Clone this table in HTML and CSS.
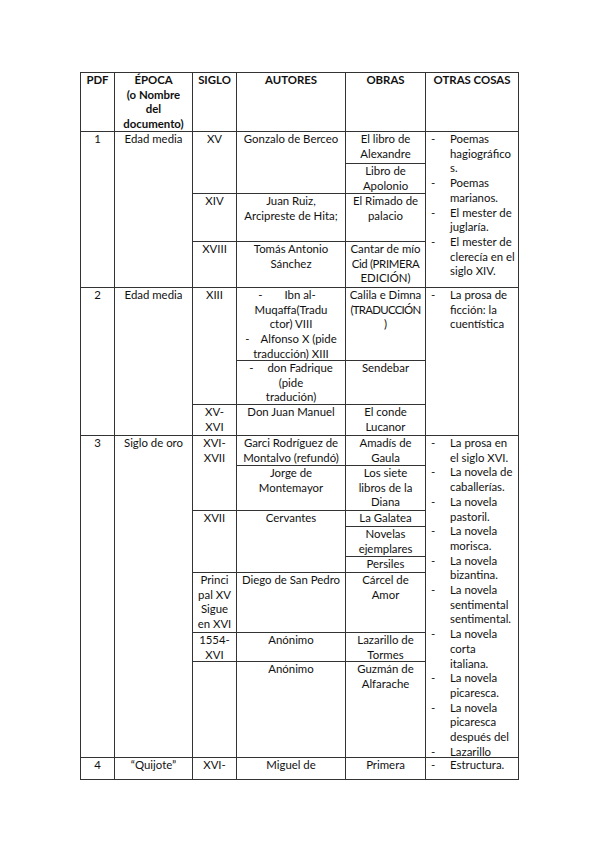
FILE: index.html
```html
<!DOCTYPE html>
<html lang="es">
<head>
<meta charset="utf-8">
<title>Tabla</title>
<link rel="stylesheet" href="styles.css">
</head>
<body>
<div class="page">
  <div class="grid">
    <div class="c h c1 r1">PDF</div>
    <div class="c h c2 r1">ÉPOCA<br>(o Nombre<br>del<br>documento)</div>
    <div class="c h c3 r1">SIGLO</div>
    <div class="c h c4 r1">AUTORES</div>
    <div class="c h c5 r1">OBRAS</div>
    <div class="c h c6 r1">OTRAS COSAS</div>

    <div class="c c1 g1">1</div>
    <div class="c c2 g1">Edad media</div>
    <div class="c c3 s-xv">XV</div>
    <div class="c c4 s-xv">Gonzalo de Berceo</div>
    <div class="c c5 r2">El libro de<br>Alexandre</div>
    <div class="c c5 r3">Libro de<br>Apolonio</div>
    <div class="c c3 r4">XIV</div>
    <div class="c c4 r4">Juan Ruiz,<br>Arcipreste de Hita;</div>
    <div class="c c5 r4">El Rimado de<br>palacio</div>
    <div class="c c3 r5">XVIII</div>
    <div class="c c4 r5">Tomás Antonio<br>Sánchez</div>
    <div class="c c5 r5">Cantar de mío<br><span class="tight">Cid (PRIMERA</span><br>EDICIÓN)</div>
    <div class="c c6 g1 list">
      <div class="li"><span class="d">-</span><span>Poemas<br>hagiográfico<br>s.</span></div>
      <div class="li"><span class="d">-</span><span>Poemas<br>marianos.</span></div>
      <div class="li"><span class="d">-</span><span>El mester de<br>juglaría.</span></div>
      <div class="li"><span class="d">-</span><span>El mester de<br>clerecía en el<br>siglo XIV.</span></div>
    </div>

    <div class="c c1 g2">2</div>
    <div class="c c2 g2">Edad media</div>
    <div class="c c3 s-xiii">XIII</div>
    <div class="c c4 r6"><span class="dash">-</span><span class="sp1"></span>Ibn al-<span class="sp2"></span><br>Muqaffa(Tradu<br>ctor) VIII<br><span class="dash">-</span><span class="sp3"></span>Alfonso X (pide<br>traducción) XIII</div>
    <div class="c c5 r6">Calila e Dimna<br><span class="tighter">(TRADUCCIÓN</span><br>)</div>
    <div class="c c4 r7"><span class="dash">-</span><span class="sp4"></span>don Fadrique<br>(pide<br>tradución)</div>
    <div class="c c5 r7">Sendebar</div>
    <div class="c c3 r8">XV-<br>XVI</div>
    <div class="c c4 r8">Don Juan Manuel</div>
    <div class="c c5 r8">El conde<br>Lucanor</div>
    <div class="c c6 g2 list">
      <div class="li"><span class="d">-</span><span>La prosa de<br>ficción: la<br>cuentística</span></div>
    </div>

    <div class="c c1 g3">3</div>
    <div class="c c2 g3">Siglo de oro</div>
    <div class="c c3 s-xvi">XVI-<br>XVII</div>
    <div class="c c4 r9">Garci Rodríguez de<br>Montalvo (refundó)</div>
    <div class="c c5 r9">Amadís de<br>Gaula</div>
    <div class="c c4 r10">Jorge de<br>Montemayor</div>
    <div class="c c5 r10">Los siete<br>libros de la<br>Diana</div>
    <div class="c c3 s-xvii">XVII</div>
    <div class="c c4 s-xvii">Cervantes</div>
    <div class="c c5 r11">La Galatea</div>
    <div class="c c5 r12">Novelas<br>ejemplares</div>
    <div class="c c5 r13">Persiles</div>
    <div class="c c3 r14">Princi<br>pal XV<br>Sigue<br>en XVI</div>
    <div class="c c4 r14">Diego de San Pedro</div>
    <div class="c c5 r14">Cárcel de<br>Amor</div>
    <div class="c c3 r15">1554-<br>XVI</div>
    <div class="c c4 r15">Anónimo</div>
    <div class="c c5 r15">Lazarillo de<br>Tormes</div>
    <div class="c c3 r16"></div>
    <div class="c c4 r16">Anónimo</div>
    <div class="c c5 r16">Guzmán de<br>Alfarache</div>
    <div class="c c6 g3 list">
      <div class="li"><span class="d">-</span><span>La prosa en<br>el siglo XVI.</span></div>
      <div class="li"><span class="d">-</span><span>La novela de<br>caballerías.</span></div>
      <div class="li"><span class="d">-</span><span>La novela<br>pastoril.</span></div>
      <div class="li"><span class="d">-</span><span>La novela<br>morisca.</span></div>
      <div class="li"><span class="d">-</span><span>La novela<br>bizantina.</span></div>
      <div class="li"><span class="d">-</span><span>La novela<br>sentimental<br>sentimental.</span></div>
      <div class="li"><span class="d">-</span><span>La novela<br>corta<br>italiana.</span></div>
      <div class="li"><span class="d">-</span><span>La novela<br>picaresca.</span></div>
      <div class="li"><span class="d">-</span><span>La novela<br>picaresca<br>después del</span></div>
      <div class="li"><span class="d">-</span><span>Lazarillo</span></div>
    </div>

    <div class="c c1 r17">4</div>
    <div class="c c2 r17">“Quijote”</div>
    <div class="c c3 r17">XVI-</div>
    <div class="c c4 r17">Miguel de</div>
    <div class="c c5 r17">Primera</div>
    <div class="c c6 r17 list">
      <div class="li"><span class="d">-</span><span>Estructura.</span></div>
    </div>
  </div>
</div>
</body>
</html>
```
FILE: styles.css
```css
html, body {
  margin: 0;
  padding: 0;
  background: #ffffff;
}
.page {
  padding: 72px 0 0 80px;
}
.grid {
  display: grid;
  width: max-content;
  grid-template-columns: 33px 77px 43px 108px 79px 92px;
  grid-template-rows: 58px 31px 29px 47px 45px 72px 43px 30px 29px 44px 15px 29px 15px 59px 28px 95px 21px;
  gap: 1px;
  padding: 1px;
  background: #333333;
  font-family: Lato, "Noto Sans", sans-serif;
  font-size: 11.4px;
  line-height: 14.7px;
  color: #111111;
}
.c {
  background: #ffffff;
  text-align: center;
  white-space: nowrap;
  overflow: visible;
  padding-top: 0;
}
.h { font-weight: bold; }
.tight { letter-spacing: -0.35px; }
.tighter { letter-spacing: -0.7px; }
.c1 { grid-column: 1; }
.c2 { grid-column: 2; }
.c3 { grid-column: 3; }
.c4 { grid-column: 4; }
.c5 { grid-column: 5; }
.c6 { grid-column: 6; }
.r1 { grid-row: 1; }
.r2 { grid-row: 2; }
.r3 { grid-row: 3; }
.r4 { grid-row: 4; }
.r5 { grid-row: 5; }
.r6 { grid-row: 6; }
.r7 { grid-row: 7; }
.r8 { grid-row: 8; }
.r9 { grid-row: 9; }
.r10 { grid-row: 10; }
.r11 { grid-row: 11; }
.r12 { grid-row: 12; }
.r13 { grid-row: 13; }
.r14 { grid-row: 14; }
.r15 { grid-row: 15; }
.r16 { grid-row: 16; }
.r17 { grid-row: 17; }
.g1 { grid-row: 2 / 6; }
.g2 { grid-row: 6 / 9; }
.g3 { grid-row: 9 / 17; }
.s-xv { grid-row: 2 / 4; }
.s-xiii { grid-row: 6 / 8; }
.s-xvi { grid-row: 9 / 11; }
.s-xvii { grid-row: 11 / 14; }
.list {
  text-align: left;
  padding-left: 5px;
}
.li {
  display: flex;
}
.d {
  width: 19px;
  flex: none;
}
.dash { display: inline-block; }
.sp1 { display: inline-block; width: 22px; }
.sp2 { display: inline-block; width: 8px; }
.sp3 { display: inline-block; width: 11px; }
.sp4 { display: inline-block; width: 14px; }
```
